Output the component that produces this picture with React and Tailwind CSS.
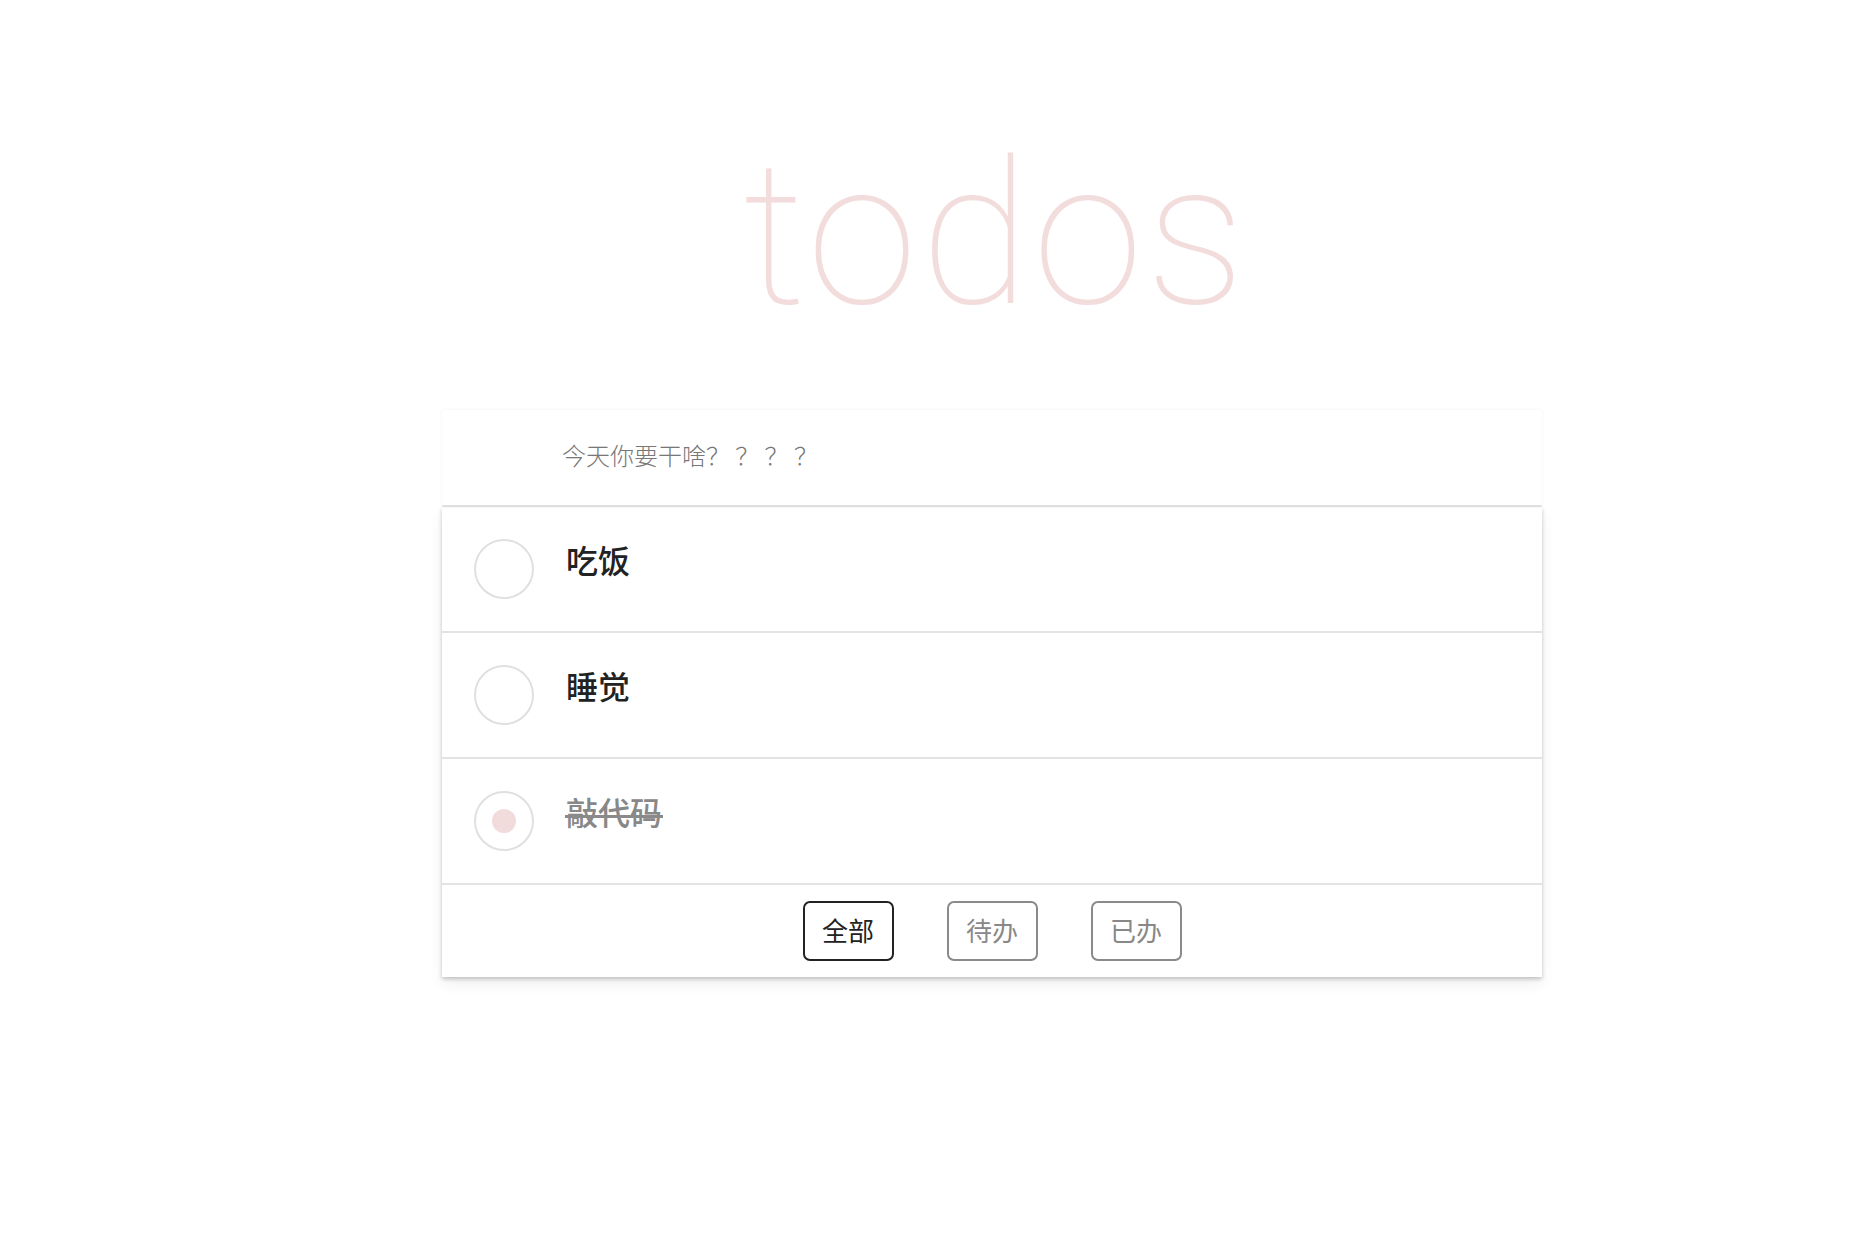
import React, { useState } from "react";

const todos = [
  { id: 1, text: "吃饭", done: false },
  { id: 2, text: "睡觉", done: false },
  { id: 3, text: "敲代码", done: true },
];

export default function App() {
  const [filter, setFilter] = useState("all");
  const cjk = { fontFamily: '"Noto Sans CJK SC", "Noto Sans", sans-serif' };
  return (
    <div className="min-h-[1246px] w-full bg-white" style={cjk}>
      <div className="flex flex-col items-center pl-[120px] pt-[135px]">
        <h1
          className="h-[200px] text-[200px] leading-[200px] font-thin text-[#f2dcdc] tracking-[3px] pl-[7px]"
          style={{ fontFamily: '"Roboto", "Helvetica Neue", sans-serif' }}
        >
          todos
        </h1>
        <div className="mt-[75px] w-[1100px] bg-white">
          <div className="h-[95px] flex items-center bg-white shadow-[0_0_3px_rgba(0,0,0,0.06)] border-b-2 border-[#e3e3e3] box-content">
            <input
              className="w-full h-full pl-[120px] pr-6 pb-[6px] text-[24px] font-light text-[#333] outline-none bg-transparent placeholder:text-[#777]"
              placeholder="今天你要干啥？ ？ ？ ？"
              style={cjk}
            />
          </div>
          <div className="shadow-[0_2px_4px_rgba(0,0,0,0.22),0_8px_14px_rgba(0,0,0,0.06)]">
            <ul>
              {todos.map((t) => (
                <li
                  key={t.id}
                  className="h-[126px] flex items-center border-b-2 border-[#e3e3e3]"
                >
                  <span className="ml-[32px] w-[60px] h-[60px] rounded-full border-2 border-[#e0e0e0] flex items-center justify-center shrink-0">
                    {t.done && (
                      <span className="w-[24px] h-[24px] rounded-full bg-[#f2dbdb]" />
                    )}
                  </span>
                  <span
                    className={
                      t.done
                        ? "relative block ml-[32px] mb-[20px] h-[46px] leading-[46px] text-[32px] font-medium text-[#888888]"
                        : "relative block ml-[32px] mb-[20px] h-[46px] leading-[46px] text-[32px] font-medium text-[#222222]"
                    }
                  >
                    {t.text}
                    {t.done && (
                      <span className="absolute left-[-1px] right-[-1px] top-[27px] h-[3px] bg-[#8a8a8a]" />
                    )}
                  </span>
                </li>
              ))}
            </ul>
            <div className="h-[92px] flex items-center justify-center gap-[53px]">
              {[
                ["all", "全部"],
                ["active", "待办"],
                ["done", "已办"],
              ].map(([k, label]) => (
                <button
                  key={k}
                  onClick={() => setFilter(k)}
                  className={
                    filter === k
                      ? "w-[91px] h-[60px] pb-[3px] rounded-[7px] border-2 border-[#222] text-[#222] text-[26px] leading-none flex items-center justify-center"
                      : "w-[91px] h-[60px] pb-[3px] rounded-[7px] border-2 border-[#8a8a8a] text-[#888] text-[26px] leading-none flex items-center justify-center"
                  }
                  style={cjk}
                >
                  {label}
                </button>
              ))}
            </div>
          </div>
        </div>
      </div>
    </div>
  );
}
